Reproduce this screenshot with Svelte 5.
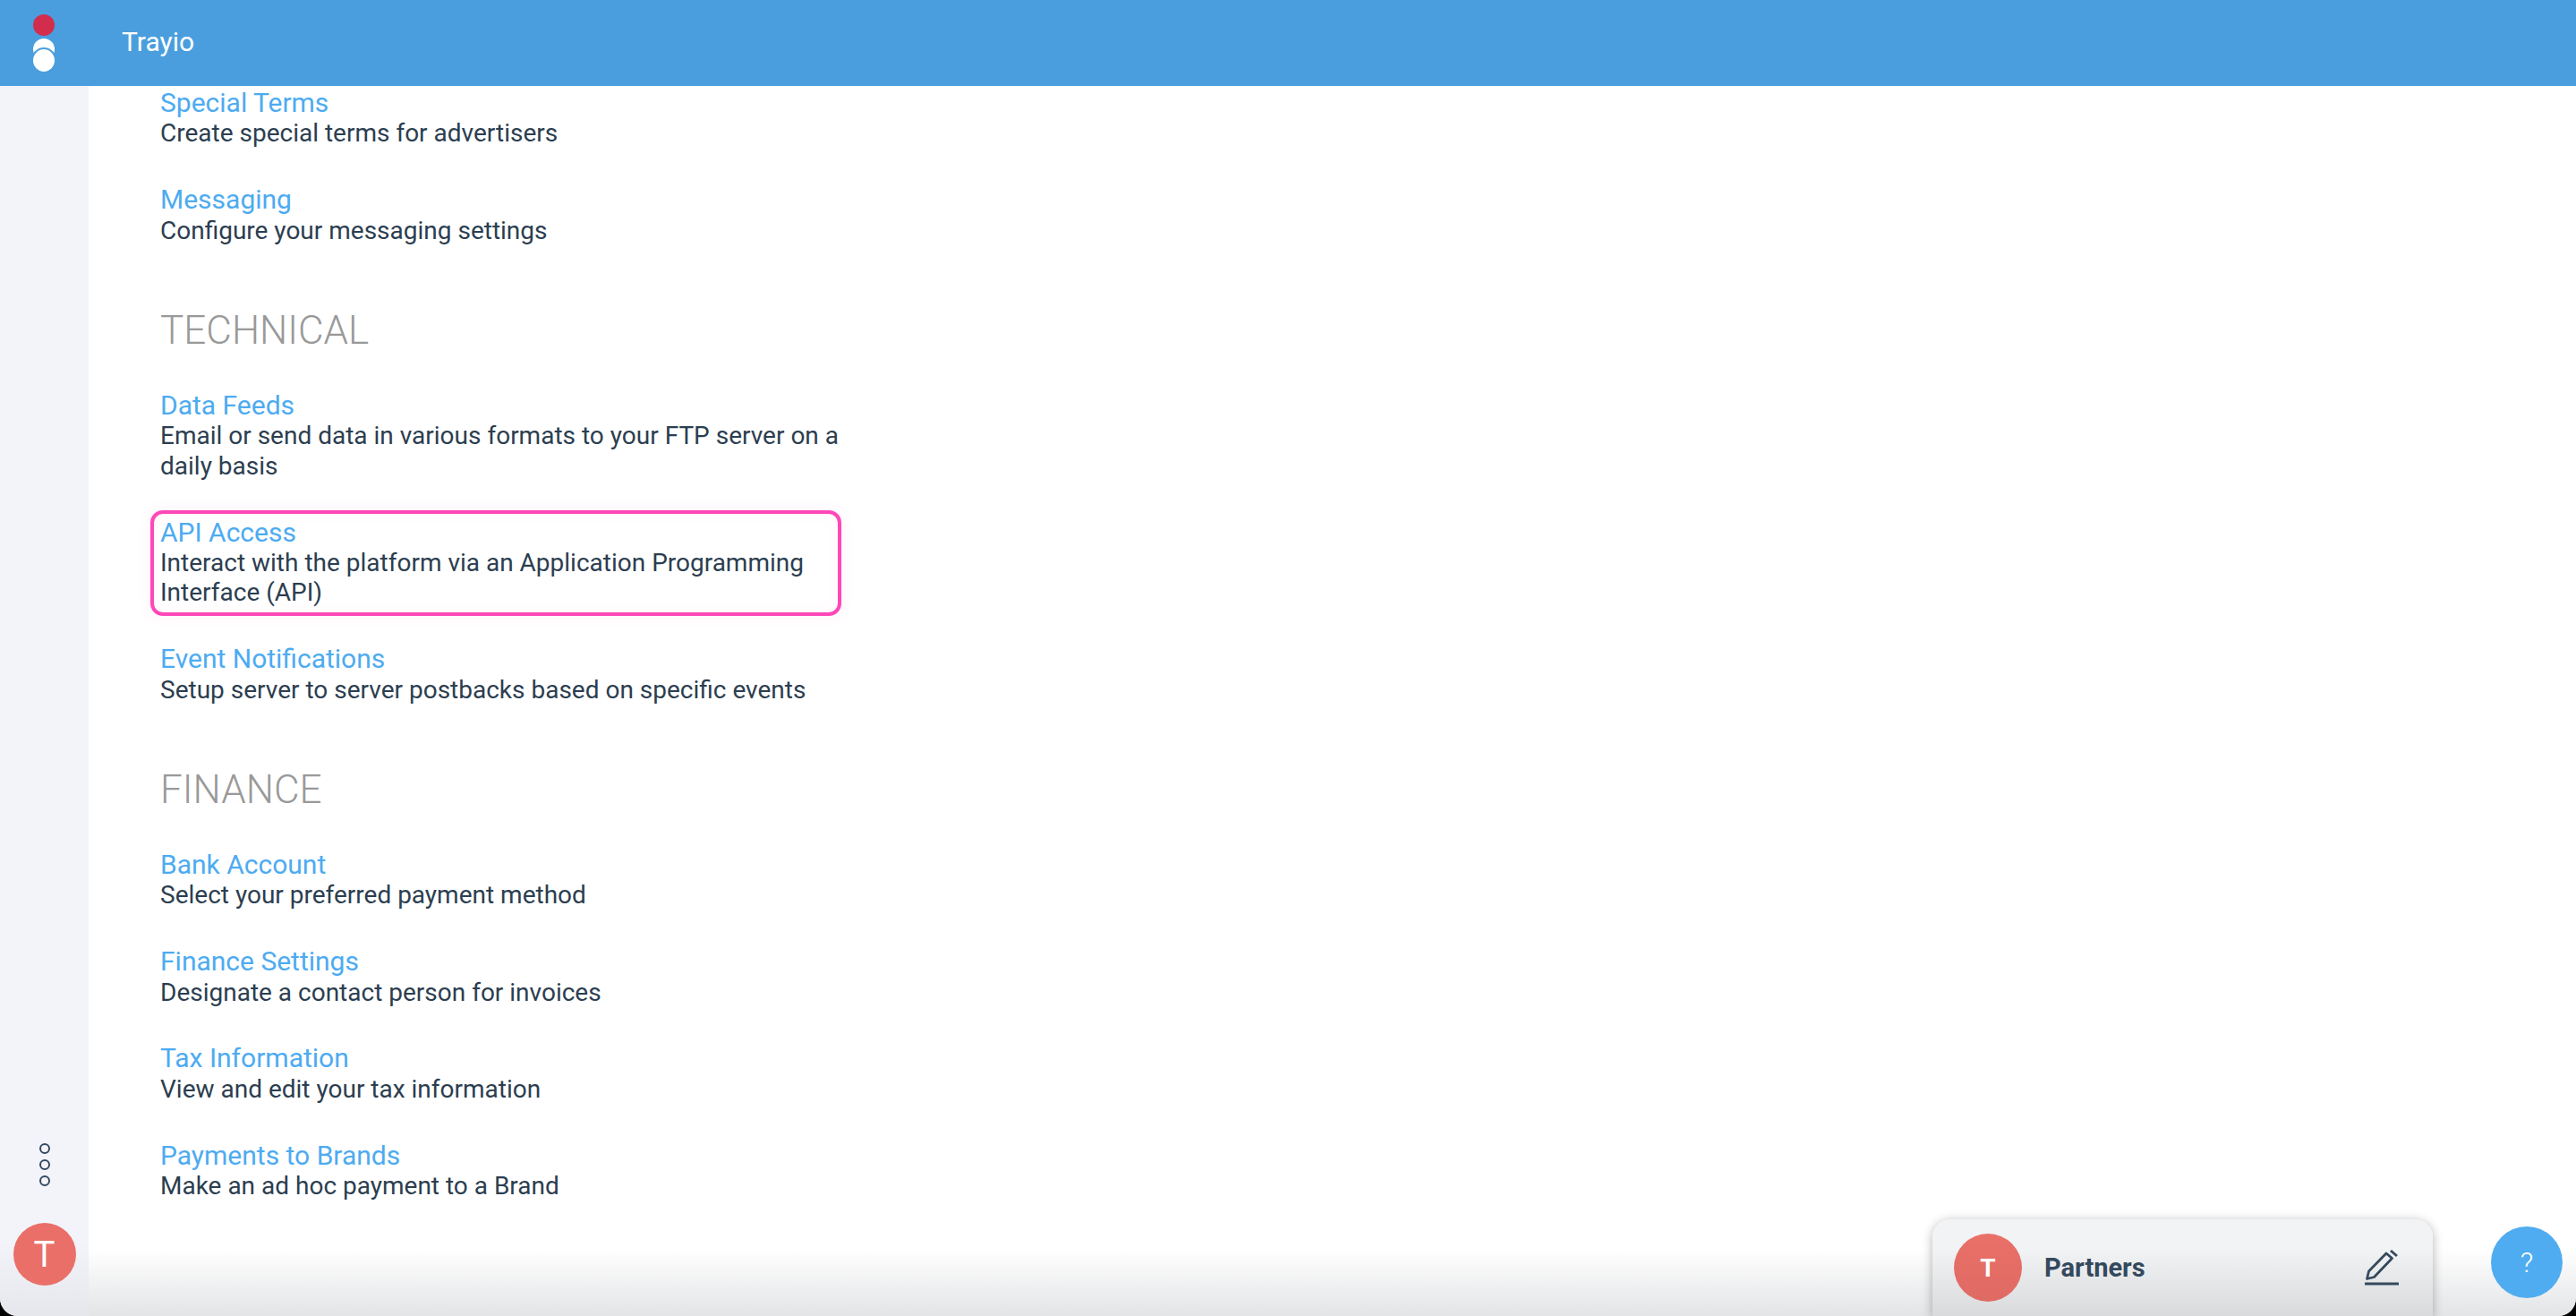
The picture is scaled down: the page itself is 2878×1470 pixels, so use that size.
<script>
	const sections = [
		{
			items: [
				{ title: 'Special Terms', desc: 'Create special terms for advertisers' },
				{ title: 'Messaging', desc: 'Configure your messaging settings' }
			]
		},
		{
			heading: 'TECHNICAL',
			items: [
				{ title: 'Data Feeds', desc: 'Email or send data in various formats to your FTP server on a daily basis' },
				{ title: 'API Access', desc: 'Interact with the platform via an Application Programming Interface (API)', marked: true },
				{ title: 'Event Notifications', desc: 'Setup server to server postbacks based on specific events' }
			]
		},
		{
			heading: 'FINANCE',
			items: [
				{ title: 'Bank Account', desc: 'Select your preferred payment method' },
				{ title: 'Finance Settings', desc: 'Designate a contact person for invoices' },
				{ title: 'Tax Information', desc: 'View and edit your tax information' },
				{ title: 'Payments to Brands', desc: 'Make an ad hoc payment to a Brand' }
			]
		}
	];
</script>

<div class="window">
	<header class="top-bar">
		<div class="logo">
			<span class="dot red"></span>
			<span class="dot white back"></span>
			<span class="dot white front"></span>
		</div>
		<span class="brand">Trayio</span>
	</header>

	<div class="body">
		<aside class="sidebar">
			<div class="more">
				<span></span>
				<span></span>
				<span></span>
			</div>
			<div class="avatar">T</div>
		</aside>

		<main class="content">
			{#each sections as section}
				<section class="section">
					{#if section.heading}
						<h2>{section.heading}</h2>
					{/if}
					{#each section.items as item}
						<div class="item" class:marked={item.marked}>
							<a href="#top">{item.title}</a>
							<p>{item.desc}</p>
						</div>
					{/each}
				</section>
			{/each}
		</main>
	</div>

	<div class="fade"></div>

	<div class="account-card">
		<div class="card-avatar">T</div>
		<span class="card-name">Partners</span>
		<svg class="edit" viewBox="0 0 38 40" width="38" height="40" fill="none" stroke="#34495e" stroke-width="2.8">
			<path d="M2.5 32.5 L4.5 24 L24 4 L30.5 9.5 L10.5 30.5 Z" stroke-linejoin="round" />
			<path d="M29 1 L36 7" />
			<path d="M0 38 H38" stroke-width="3" />
		</svg>
	</div>

	<div class="help">?</div>
</div>

<style>
	:global(body) {
		margin: 0;
		background: #000;
	}

	.window {
		position: relative;
		width: 2878px;
		height: 1470px;
		overflow: hidden;
		background: #fff;
		border-radius: 0 0 20px 20px;
		font-family: Roboto, sans-serif;
		display: flex;
		flex-direction: column;
	}

	.top-bar {
		height: 96px;
		flex-shrink: 0;
		background: #4a9edd;
		display: flex;
		align-items: center;
		color: #fff;
	}

	.logo {
		position: relative;
		width: 24px;
		height: 64px;
		margin-left: 37px;
		margin-top: -1px;
	}

	.dot {
		position: absolute;
		left: 0;
		width: 24px;
		height: 24px;
		border-radius: 50%;
	}

	.red {
		top: 0;
		background: #d22d4d;
	}

	.white {
		background: #fff;
	}

	.back {
		top: 27px;
	}

	.front {
		top: 39px;
		height: 25px;
		box-shadow: 0 0 0 2px #4a9edd;
	}

	.brand {
		margin-left: 75px;
		font-size: 30px;
		margin-top: -3px;
	}

	.body {
		flex: 1;
		display: flex;
		min-height: 0;
	}

	.sidebar {
		width: 99px;
		flex-shrink: 0;
		background: linear-gradient(to bottom, #f3f4f9 94%, #e6e7ec);
		display: flex;
		flex-direction: column;
		align-items: center;
		justify-content: flex-end;
		padding-bottom: 34px;
		box-sizing: border-box;
	}

	.more {
		display: flex;
		flex-direction: column;
		gap: 6px;
		margin-bottom: 41px;
	}

	.more span {
		width: 12px;
		height: 12px;
		box-sizing: border-box;
		border: 2px solid #34495e;
		border-radius: 50%;
	}

	.avatar {
		width: 70px;
		height: 70px;
		border-radius: 50%;
		background: #e96f68;
		color: #fff;
		font-size: 40px;
		display: flex;
		align-items: center;
		justify-content: center;
	}

	.content {
		flex: 1;
		padding: 2px 0 0 80px;
	}

	.section {
		width: 760px;
		margin-bottom: 69px;
	}

	h2 {
		margin: 0 0 41px;
		font-size: 44px;
		font-weight: 300;
		line-height: 52px;
		color: #999;
	}

	.item {
		position: relative;
		margin-bottom: 40.4px;
		line-height: 33.4px;
	}

	.item:last-child {
		margin-bottom: 0;
	}

	.item a {
		display: block;
		font-size: 30px;
		color: #4dabf1;
		text-decoration: none;
		margin-bottom: 1px;
	}

	.item p {
		margin: 0;
		font-size: 28px;
		color: #2c3e50;
	}

	.marked::after {
		content: '';
		position: absolute;
		top: -8px;
		bottom: -9px;
		left: -11px;
		right: -1px;
		border: 4px solid #ff47b8;
		border-radius: 14px;
		box-shadow: 0 0 16px rgba(255, 71, 184, 0.08), inset 0 0 16px rgba(255, 71, 184, 0.04);
	}

	.fade {
		position: absolute;
		left: 99px;
		right: 0;
		bottom: 0;
		height: 75px;
		background: linear-gradient(to bottom, rgba(225, 226, 228, 0), #e3e4e6);
		pointer-events: none;
	}

	.account-card {
		position: absolute;
		left: 2159px;
		top: 1362px;
		width: 559px;
		height: 108px;
		box-sizing: border-box;
		padding: 16px 38px 0 24px;
		display: flex;
		align-items: flex-start;
		border-radius: 20px 20px 0 0;
		background: linear-gradient(to bottom, #f2f3f5 30%, #d9dadc);
		box-shadow: 0 2px 12px rgba(0, 0, 0, 0.3);
	}

	.card-avatar {
		width: 76px;
		height: 76px;
		border-radius: 50%;
		background: linear-gradient(to bottom, #ea7068, #df6a64);
		color: #fff;
		font-size: 28px;
		font-weight: 700;
		display: flex;
		align-items: center;
		justify-content: center;
		flex-shrink: 0;
	}

	.card-name {
		margin-left: 25px;
		flex: 1;
		font-size: 29px;
		font-weight: 700;
		line-height: 76px;
		color: #34495e;
	}

	.edit {
		margin-top: 18px;
	}

	.help {
		position: absolute;
		left: 2783px;
		top: 1370px;
		width: 80px;
		height: 80px;
		border-radius: 50%;
		background: #50acf0;
		color: #fff;
		font-size: 32px;
		font-weight: 300;
		display: flex;
		align-items: center;
		justify-content: center;
	}
</style>
